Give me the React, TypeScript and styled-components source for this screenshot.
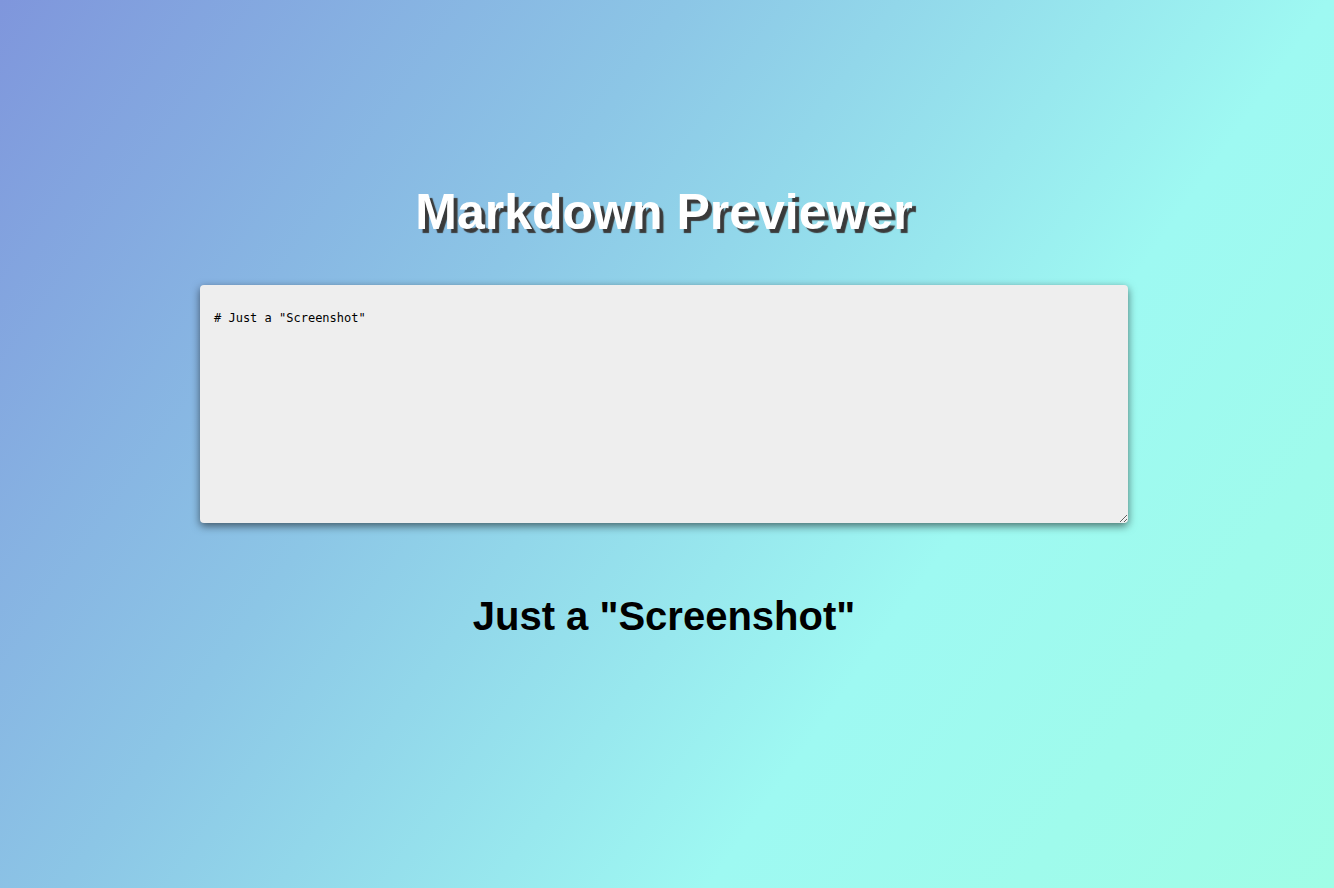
import React, { useState } from "react";
import styled, { createGlobalStyle } from "styled-components";

const GlobalStyle = createGlobalStyle`
  html, body {
    margin: 0;
    padding: 0;
    height: 100%;
  }
  body {
    font-family: "Liberation Sans", Arial, sans-serif;
    background: linear-gradient(125deg, #7f96dc 0%, #8cc6e6 35%, #9ef9f2 68%, #a0fde6 100%);
    background-attachment: fixed;
    min-height: 888px;
  }
`;

const Page = styled.main`
  box-sizing: border-box;
  min-height: 888px;
  padding: 184px 6px 0 0;
  display: flex;
  flex-direction: column;
  align-items: center;
`;

const Title = styled.h1`
  margin: 0;
  font-family: "Liberation Sans", Arial, sans-serif;
  font-size: 50px;
  font-weight: 700;
  line-height: 57px;
  color: #ffffff;
  text-shadow: 4px 4px 1px #3a3a3a;
`;

const Editor = styled.textarea`
  box-sizing: border-box;
  margin-top: 44px;
  width: 928px;
  height: 238px;
  padding: 26px 14px 18px;
  border: none;
  outline: none;
  border-radius: 4px;
  background: #eeeeee;
  color: #000;
  font-family: "DejaVu Sans Mono", "Liberation Mono", monospace;
  font-size: 12px;
  line-height: 14px;
  box-shadow: 0 3px 8px rgba(0, 0, 0, 0.55);
`;

const Preview = styled.section`
  margin-top: 70px;
  text-align: center;
`;

const PreviewHeading = styled.h1`
  margin: 0;
  font-family: "Liberation Sans", Arial, sans-serif;
  font-size: 40px;
  font-weight: 700;
  line-height: 46px;
  color: #000;
`;

export default function App() {
  const [text, setText] = useState('# Just a "Screenshot"');
  const heading = text.replace(/^#\s*/, "");
  return (
    <>
      <GlobalStyle />
      <Page>
        <Title>Markdown Previewer</Title>
        <Editor value={text} onChange={(e) => setText(e.target.value)} spellCheck={false} />
        <Preview>
          <PreviewHeading>{heading}</PreviewHeading>
        </Preview>
      </Page>
    </>
  );
}
